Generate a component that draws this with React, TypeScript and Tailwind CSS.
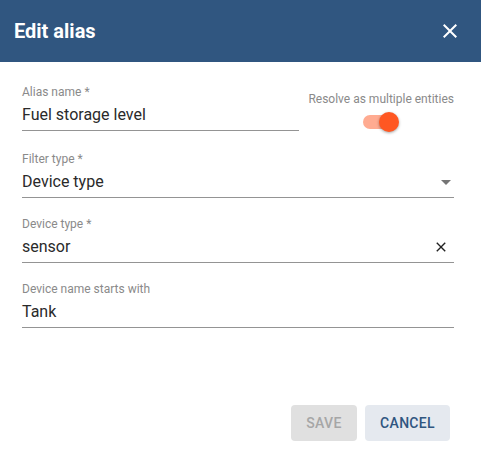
import React from 'react';

const font = { fontFamily: 'Roboto, "Helvetica Neue", Arial, sans-serif' };

function Field({ label, value, trailing, className = '' }: { label: string; value: string; trailing?: React.ReactNode; className?: string }) {
    return (
        <div className={`flex flex-col border-b border-[#949494] ${className}`}>
            <div className="h-4 text-[12px] leading-4 text-[#8a8a8a]">{label}</div>
            <div className="mt-[3px] mb-[3px] flex h-6 items-center justify-between">
                <span className="text-[16px] leading-6 text-[#2a2a2a]">{value}</span>
                {trailing}
            </div>
        </div>
    );
}

export default function App() {
    return (
        <div className="flex h-[456px] w-[481px] flex-col bg-white" style={font}>
            <div className="flex h-[62px] items-center justify-between bg-[#305680] pl-[14px] pr-[19px]">
                <h2 className="text-[20px] font-bold text-white">Edit alias</h2>
                <svg width="24" height="24" viewBox="0 0 24 24" fill="white">
                    <path d="M19 6.41 17.59 5 12 10.59 6.41 5 5 6.41 10.59 12 5 17.59 6.41 19 12 13.41 17.59 19 19 17.59 13.41 12z" />
                </svg>
            </div>

            <div className="flex flex-1 flex-col pl-[22px] pr-[27px] pt-[22px]">
                <div className="mb-[20px] flex items-start">
                    <Field label="Alias name *" value="Fuel storage level" className="w-[277px]" />
                    <div className="flex flex-1 flex-col items-end pt-[7px]">
                        <div className="whitespace-nowrap text-[12px] leading-4 text-[#8a8a8a]">Resolve as multiple entities</div>
                        <div className="relative mt-[8px] mr-[57px] h-[14px] w-[34px] rounded-full bg-[#ffab91]">
                            <div className="absolute -top-[3px] right-[-2px] h-5 w-5 rounded-full bg-[#ff5722] shadow-[0_1px_3px_rgba(0,0,0,0.35)]" />
                        </div>
                    </div>
                </div>

                <Field
                    label="Filter type *"
                    value="Device type"
                    className="mb-[18px]"
                    trailing={<span className="mr-[3px] h-0 w-0 border-x-[5px] border-t-[5px] border-x-transparent border-t-[#757575]" />}
                />

                <Field
                    label="Device type *"
                    value="sensor"
                    className="mb-[18px]"
                    trailing={
                        <svg width="18" height="18" viewBox="0 0 24 24" fill="#212121" className="mr-[4px]">
                            <path d="M18.3 5.71 17 4.41 12 9.41 7 4.41 5.71 5.71 10.71 10.71 5.71 15.71 7 17 12 12 17 17 18.3 15.71 13.3 10.71z" transform="translate(0 1.3)" />
                        </svg>
                    }
                />

                <Field label="Device name starts with" value="Tank" />

                <div className="mt-auto mb-[15px] flex justify-end gap-2 pr-[4px]">
                    <button className="h-9 w-[66px] rounded bg-[#e0e0e0] text-[14px] font-medium tracking-[0.3px] text-[#a6a6a6]">SAVE</button>
                    <button className="h-9 w-[85px] rounded bg-[#e5e9ef] text-[14px] font-medium tracking-[0.3px] text-[#305680]">CANCEL</button>
                </div>
            </div>
        </div>
    );
}
